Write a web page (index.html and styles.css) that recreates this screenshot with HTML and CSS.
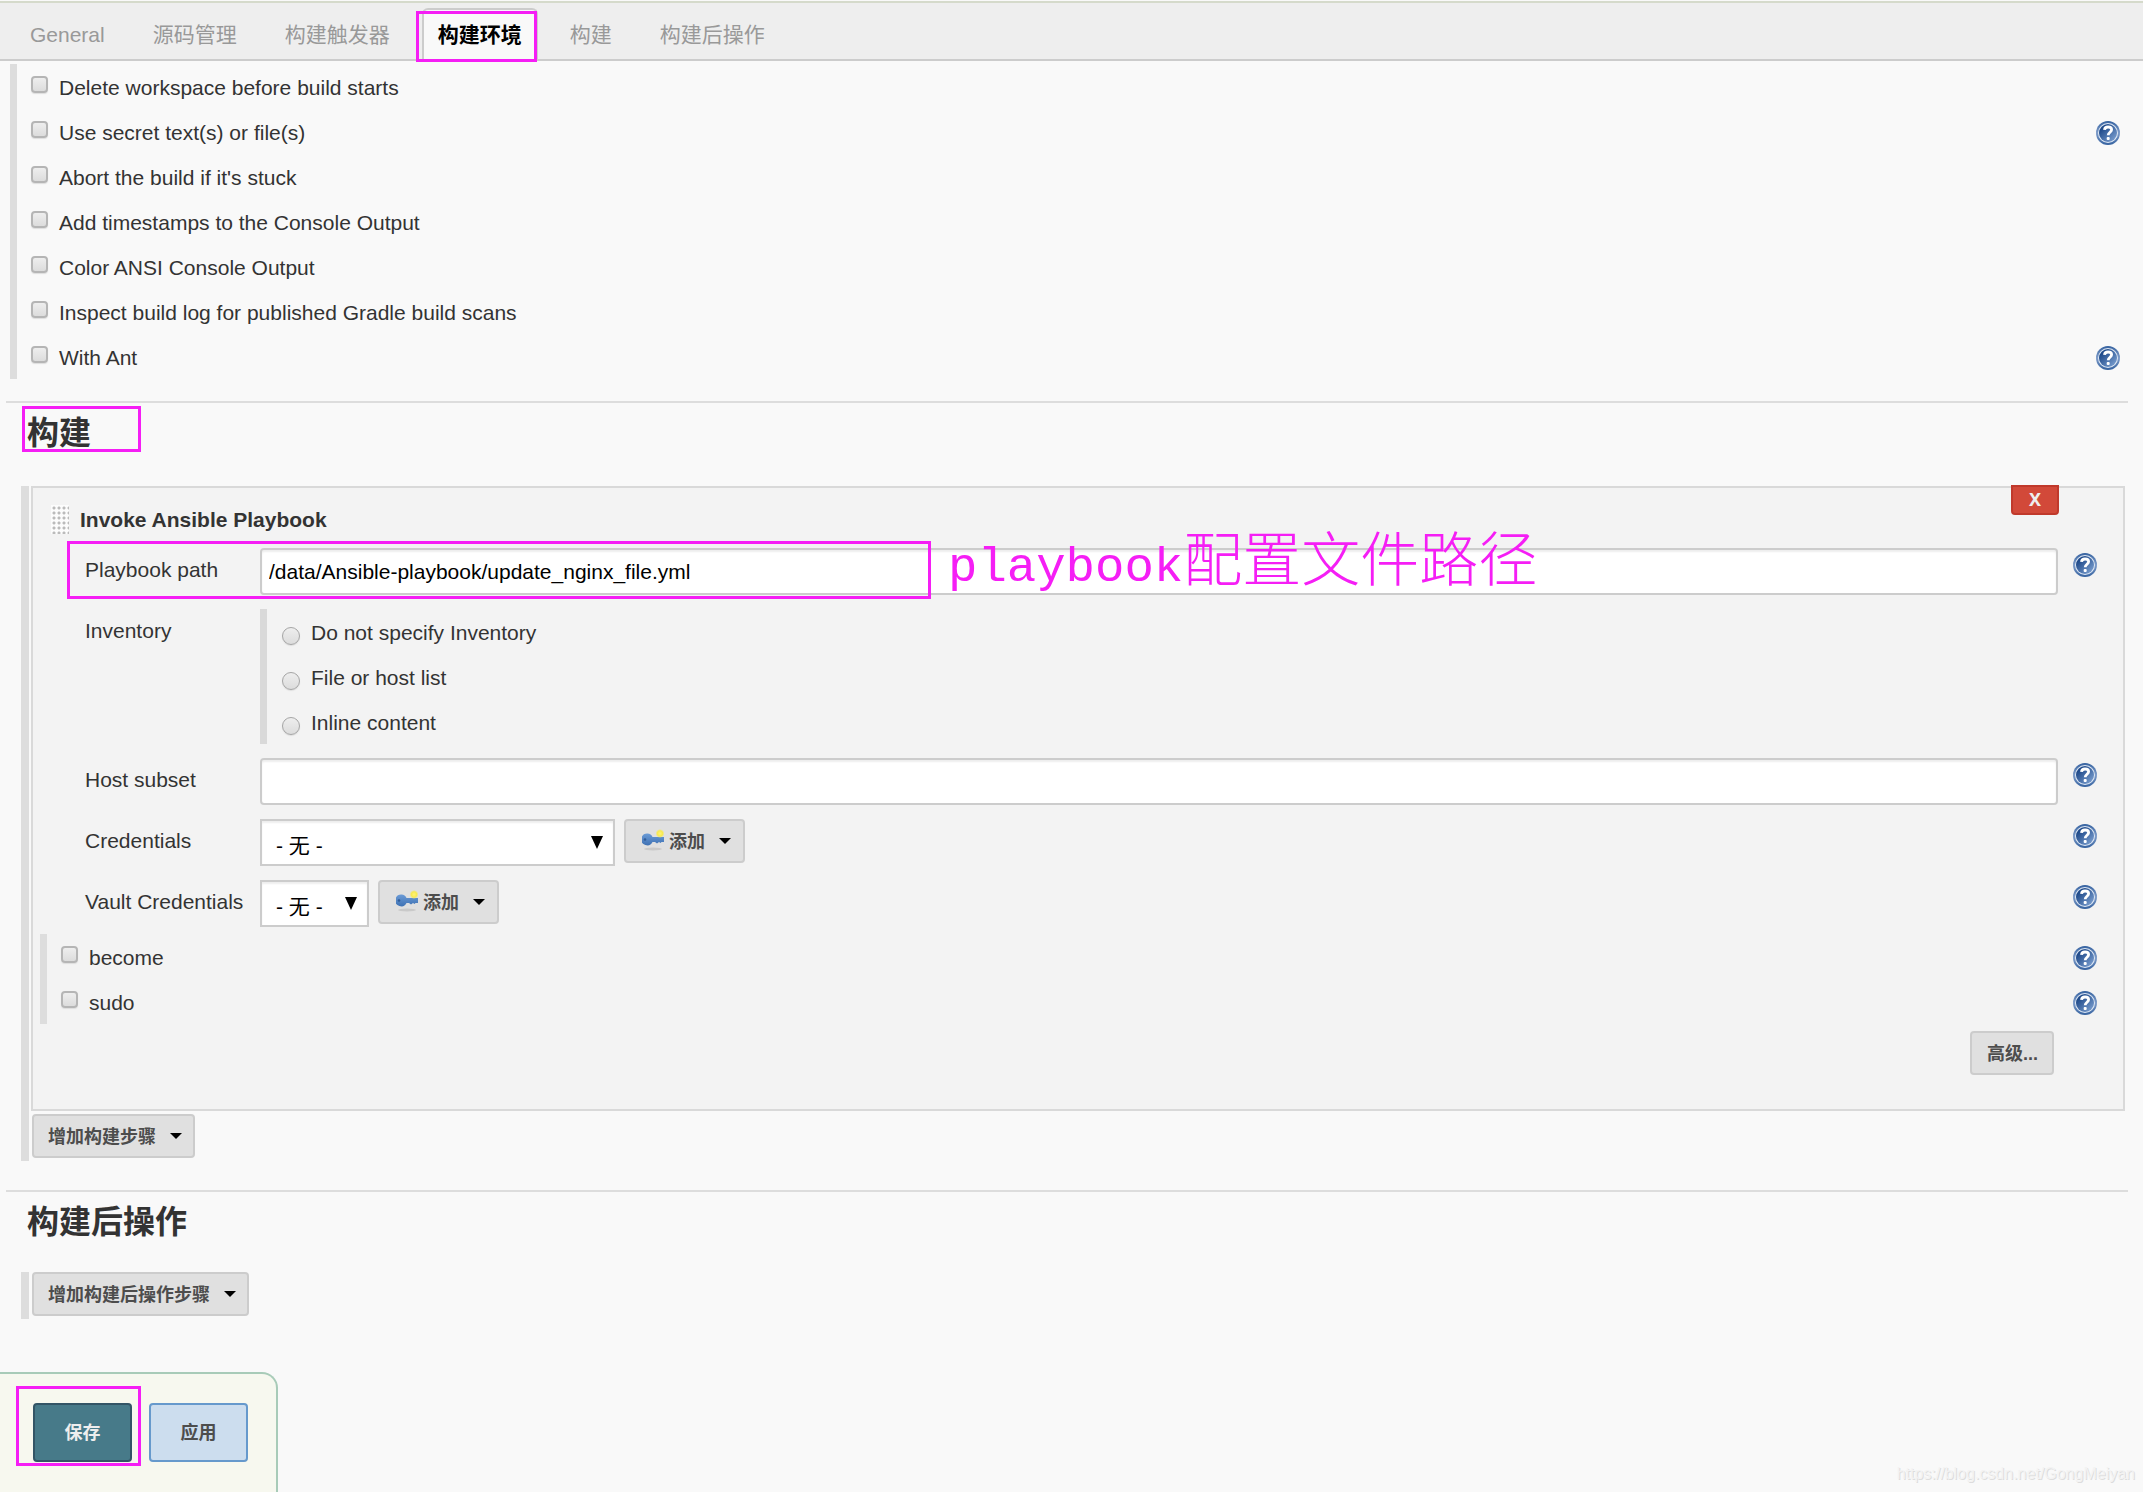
FILE: index.html
```html
<!DOCTYPE html>
<html lang="zh-CN">
<head>
<meta charset="utf-8">
<title>构建配置</title>
<link rel="stylesheet" href="styles.css">
</head>
<body>
<svg class="sprite" aria-hidden="true">
  <defs>
    <linearGradient id="help-fill" x1="0" y1="0" x2="1" y2="1">
      <stop offset="0.2" stop-color="#1f4a8a"/>
      <stop offset="1" stop-color="#86a9d8"/>
    </linearGradient>
    <linearGradient id="help-rim" x1="0" y1="0" x2="0" y2="1">
      <stop offset="0" stop-color="#34619f"/>
      <stop offset="0.5" stop-color="#7f9dca"/>
      <stop offset="1" stop-color="#34619f"/>
    </linearGradient>
    <linearGradient id="key-fill" x1="0" y1="0" x2="0" y2="1">
      <stop offset="0" stop-color="#6b9bd6"/>
      <stop offset="1" stop-color="#3f72b4"/>
    </linearGradient>
    <radialGradient id="key-glow">
      <stop offset="0" stop-color="#fff27a"/>
      <stop offset="0.6" stop-color="#f7ea50"/>
      <stop offset="1" stop-color="#f7ea50" stop-opacity="0"/>
    </radialGradient>
    <symbol id="icon-help" viewBox="0 0 24 24">
      <circle cx="12" cy="12" r="12" fill="url(#help-rim)"/>
      <circle cx="12" cy="12" r="10" fill="#dfe8f4"/>
      <circle cx="12" cy="12" r="9" fill="url(#help-fill)"/>
      <path d="M8.500 8.800C8.700 6.800 10.200 6 12 6c2.100 0 3.600 1 3.600 2.800 0 2.300-3.400 2.600-3.400 5.400" fill="none" stroke="#fff" stroke-width="2.800"/>
      <rect x="10.700" y="16" width="3" height="3" rx="1" fill="#fff"/>
    </symbol>
    <symbol id="icon-key" viewBox="0 0 22 22">
      <ellipse cx="11" cy="20" rx="9" ry="1.500" fill="#c9c9c9"/>
      <path d="M5.500 4.500a5.600 5.600 0 0 1 5 3.500H22v5h-2.500l-1 1-1.500-1-2 1.400-2-1.400h-2.500A5.900 5.900 0 1 1 5.500 4.500z" fill="url(#key-fill)"/>
      <circle cx="3" cy="10.500" r="1.300" fill="#2f5c98"/>
      <circle cx="18" cy="4.500" r="4.500" fill="url(#key-glow)"/>
    </symbol>
  </defs>
</svg>

<nav class="tabs">
  <a class="tab" href="#general">General</a>
  <a class="tab" href="#scm">源码管理</a>
  <a class="tab" href="#triggers">构建触发器</a>
  <a class="tab tab-active" href="#environment">构建环境<span class="mark mark-tab"></span></a>
  <a class="tab" href="#build">构建</a>
  <a class="tab" href="#post-build">构建后操作</a>
</nav>

<main>
  <section class="options" id="environment">
    <div class="option"><label><input class="check" type="checkbox">Delete workspace before build starts</label></div>
    <div class="option"><label><input class="check" type="checkbox">Use secret text(s) or file(s)</label><button class="help" type="button" aria-label="帮助"><svg><use href="#icon-help"/></svg></button></div>
    <div class="option"><label><input class="check" type="checkbox">Abort the build if it's stuck</label></div>
    <div class="option"><label><input class="check" type="checkbox">Add timestamps to the Console Output</label></div>
    <div class="option"><label><input class="check" type="checkbox">Color ANSI Console Output</label></div>
    <div class="option"><label><input class="check" type="checkbox">Inspect build log for published Gradle build scans</label></div>
    <div class="option"><label><input class="check" type="checkbox">With Ant</label><button class="help" type="button" aria-label="帮助"><svg><use href="#icon-help"/></svg></button></div>
  </section>

  <section class="section" id="build">
    <h2 class="heading">构建<span class="mark mark-heading"></span></h2>
    <div class="steps">
      <div class="step">
        <button class="delete" type="button">X</button>
        <div class="step-title"><span class="grip"></span>Invoke Ansible Playbook</div>

        <div class="field">
          <label class="field-label" for="playbook">Playbook path</label>
          <input class="text" id="playbook" type="text" value="/data/Ansible-playbook/update_nginx_file.yml">
          <button class="help" type="button" aria-label="帮助"><svg><use href="#icon-help"/></svg></button>
          <span class="mark mark-path"></span>
          <span class="note"><span class="note-latin">playbook</span>配置文件路径</span>
        </div>

        <div class="field" role="radiogroup" aria-labelledby="inventory">
          <span class="field-label" id="inventory">Inventory</span>
          <div class="radios">
            <label><input class="radio" type="radio" name="inventory">Do not specify Inventory</label>
            <label><input class="radio" type="radio" name="inventory">File or host list</label>
            <label><input class="radio" type="radio" name="inventory">Inline content</label>
          </div>
        </div>

        <div class="field">
          <label class="field-label" for="subset">Host subset</label>
          <input class="text" id="subset" type="text">
          <button class="help" type="button" aria-label="帮助"><svg><use href="#icon-help"/></svg></button>
        </div>

        <div class="field">
          <label class="field-label" for="credentials">Credentials</label>
          <div class="picker">
            <span class="select select-wide"><select id="credentials"><option>- 无 -</option></select></span>
            <button class="button" type="button"><svg class="key"><use href="#icon-key"/></svg>添加<span class="caret"></span></button>
          </div>
          <button class="help" type="button" aria-label="帮助"><svg><use href="#icon-help"/></svg></button>
        </div>

        <div class="field">
          <label class="field-label" for="vault">Vault Credentials</label>
          <div class="picker">
            <span class="select"><select id="vault"><option>- 无 -</option></select></span>
            <button class="button" type="button"><svg class="key"><use href="#icon-key"/></svg>添加<span class="caret"></span></button>
          </div>
          <button class="help" type="button" aria-label="帮助"><svg><use href="#icon-help"/></svg></button>
        </div>

        <div class="options options-nested">
          <div class="option"><label><input class="check" type="checkbox">become</label><button class="help" type="button" aria-label="帮助"><svg><use href="#icon-help"/></svg></button></div>
          <div class="option"><label><input class="check" type="checkbox">sudo</label><button class="help" type="button" aria-label="帮助"><svg><use href="#icon-help"/></svg></button></div>
        </div>

        <div class="advanced"><button class="button" type="button">高级...</button></div>
      </div>
      <button class="button button-menu" type="button">增加构建步骤<span class="caret"></span></button>
    </div>
  </section>

  <section class="section" id="post-build">
    <h2 class="heading">构建后操作</h2>
    <div class="steps">
      <button class="button button-menu" type="button">增加构建后操作步骤<span class="caret"></span></button>
    </div>
  </section>
</main>

<footer class="footer">
  <div class="actions">
    <button class="action action-save" type="submit">保存</button>
    <button class="action" type="button">应用</button>
    <span class="mark mark-save"></span>
  </div>
  <span class="watermark">https://blog.csdn.net/GongMeiyan</span>
</footer>
</body>
</html>
```
FILE: styles.css
```css
* {
  box-sizing: border-box;
}

body {
  margin: 0;
  padding-top: 1px;
  min-height: 100vh;
  display: flex;
  flex-direction: column;
  background: #f9f9f9;
  color: #333;
  font: 21px/24px "Liberation Sans", "Noto Sans CJK SC", sans-serif;
}

button,
input,
select {
  font-family: inherit;
  margin: 0;
}

.sprite {
  position: absolute;
  width: 0;
  height: 0;
}

/* Tabs */
.tabs {
  display: flex;
  gap: 16px;
  height: 60px;
  padding: 5px 14px 0;
  background: #eee;
  border-top: 2px solid #d5dacb;
  border-bottom: 2px solid #ccc;
}

.tab {
  position: relative;
  display: flex;
  align-items: center;
  padding: 0 14px;
  border: 2px solid transparent;
  border-bottom: 0;
  border-radius: 6px 6px 0 0;
  color: #999;
  text-decoration: none;
  white-space: nowrap;
}

.tab-active {
  background: #f9f9f9;
  border-color: #ccc;
  color: #000;
  font-weight: bold;
}

/* Highlight frames and note */
.mark {
  position: absolute;
  border: 3px solid #f51ef5;
  pointer-events: none;
}

.mark-tab {
  inset: 1px -1px -3px -8px;
}

.mark-heading {
  left: 16px;
  top: 3px;
  width: 119px;
  height: 46px;
}

.mark-path {
  left: 34px;
  top: 0;
  width: 864px;
  height: 58px;
}

.mark-save {
  left: 16px;
  top: 12px;
  width: 125px;
  height: 80px;
}

.note {
  position: absolute;
  left: 915px;
  top: -17px;
  color: #f51ef5;
  font: 300 59px/64px "Noto Sans CJK SC", sans-serif;
  white-space: nowrap;
  pointer-events: none;
}

.note-latin {
  font-family: "Liberation Mono", monospace;
  font-size: 49px;
}

/* Check box lists */
.options {
  margin: 3px 15px 0 10px;
  border-left: 7px solid #ddd;
}

.option {
  display: flex;
  justify-content: space-between;
  height: 45px;
  padding: 12px 8px 0 14px;
}

.option label {
  display: flex;
  gap: 11px;
}

.options-nested {
  margin: 0 18px 0 7px;
}

.check,
.radio {
  appearance: none;
  flex: none;
  border: 2px solid #b5b5b5;
  background: linear-gradient(#eee, #dcdcdc);
  box-shadow: 0 1px 1px #ddd;
}

.check {
  width: 17px;
  height: 17px;
  border-radius: 4px;
}

.radio {
  width: 18px;
  height: 18px;
  margin-top: 6px;
  border-width: 1px;
  border-color: #a5a5a5;
  border-radius: 50%;
}

.help {
  flex: none;
  width: 24px;
  height: 24px;
  padding: 0;
  border: 0;
  background: none;
}

.help svg {
  display: block;
  width: 24px;
  height: 24px;
}

/* Sections */
.section {
  margin: 22px 15px 0 6px;
}

.section + .section {
  margin-top: 29px;
}

.heading {
  position: relative;
  height: 82px;
  margin: 0;
  padding: 12px 0 0 21px;
  border-top: 2px solid #ddd;
  font-size: 32px;
  line-height: 36px;
}

#build .heading {
  height: 85px;
}

.steps {
  margin-left: 15px;
  padding: 0 3px 3px 2px;
  border-left: 8px solid #ddd;
}

.step {
  position: relative;
  margin-bottom: 3px;
  padding-bottom: 34px;
  background: #f3f3f3;
  border: 2px solid #d9d9d9;
}

.step-title {
  display: flex;
  align-items: center;
  gap: 11px;
  height: 53px;
  padding: 10px 0 0 18px;
  font-weight: bold;
}

.grip {
  width: 18px;
  height: 29px;
  background: radial-gradient(circle at 3px 3px, #bbb 1px, #fcfcfc 2px) 0 0 / 5px 5px;
}

.delete {
  position: absolute;
  right: 64px;
  top: -3px;
  width: 48px;
  height: 30px;
  padding: 0 0 2px;
  background: #d24939;
  border: 2px solid #c0392b;
  border-radius: 0 0 4px 4px;
  color: #eee;
  font: bold 18px/24px "Noto Sans", sans-serif;
}

/* Form fields */
.field {
  position: relative;
  display: grid;
  grid-template-columns: 160px 1fr 24px;
  column-gap: 15px;
  padding: 7px 26px 7px 52px;
}

.field-label {
  padding-top: 10px;
  white-space: nowrap;
}

.field .help {
  margin-top: 5px;
}

.text {
  width: 100%;
  height: 47px;
  padding: 0 7px;
  background: #fff;
  border: 2px solid #ccc;
  border-radius: 4px;
  box-shadow: inset 0 2px 2px #eee;
  color: #000;
  font-size: 21px;
}

.radios {
  border-left: 7px solid #d9d9d9;
}

.radios label {
  display: flex;
  gap: 11px;
  height: 45px;
  padding: 12px 0 0 15px;
}

.picker {
  display: flex;
  align-items: flex-start;
  gap: 9px;
}

.select {
  position: relative;
  width: 109px;
}

.select-wide {
  width: 355px;
}

.select select {
  display: block;
  appearance: none;
  width: 100%;
  height: 47px;
  padding: 6px 14px 0;
  background: #fff;
  border: 2px solid #ccc;
  border-radius: 0;
  box-shadow: inset 0 2px 2px #eee;
  color: #000;
  font-size: 21px;
}

.select::after {
  content: "";
  position: absolute;
  right: 12px;
  top: 17px;
  width: 12px;
  height: 13px;
  background: #000;
  clip-path: polygon(0 0, 100% 0, 50% 100%);
  pointer-events: none;
}

.button {
  display: flex;
  align-items: center;
  height: 44px;
  padding: 0 14px 2px 15px;
  background: #e0e0e0;
  border: 2px solid #ccc;
  border-radius: 4px;
  color: #4d4d4d;
  font-size: 18px;
  font-weight: bold;
  white-space: nowrap;
}

.picker .button {
  padding-right: 12px;
  padding-left: 16px;
}

.button-menu {
  margin-left: 1px;
  padding-right: 11px;
  padding-left: 14px;
}

.key {
  width: 22px;
  height: 22px;
  margin-right: 5px;
}

.caret {
  width: 12px;
  height: 6px;
  margin-top: 2px;
  margin-left: 14px;
  background: #000;
  clip-path: polygon(0 0, 100% 0, 50% 100%);
}

.advanced {
  display: flex;
  justify-content: flex-end;
  padding: 7px 69px 0 0;
}

/* Footer */
.footer {
  display: flex;
  justify-content: space-between;
  align-items: flex-end;
  margin-top: auto;
}

.actions {
  position: relative;
  display: flex;
  gap: 17px;
  height: 120px;
  padding: 29px 28px 0 33px;
  background: #f7f8ef;
  border: 2px solid #a8cbb8;
  border-width: 2px 2px 0 0;
  border-radius: 0 16px 0 0;
}

.action {
  width: 99px;
  height: 59px;
  padding: 0 0 3px;
  background: #cde;
  border: 2px solid #69c;
  border-radius: 4px;
  color: #4d4d4d;
  font-size: 18px;
  font-weight: bold;
}

.action-save {
  background: #477a89;
  border-color: #335566;
  color: #eee;
}

.watermark {
  padding: 0 8px 6px 0;
  color: #f3f3f3;
  font-size: 16px;
  text-shadow: 1px 1px 0 #ddd;
}
```
